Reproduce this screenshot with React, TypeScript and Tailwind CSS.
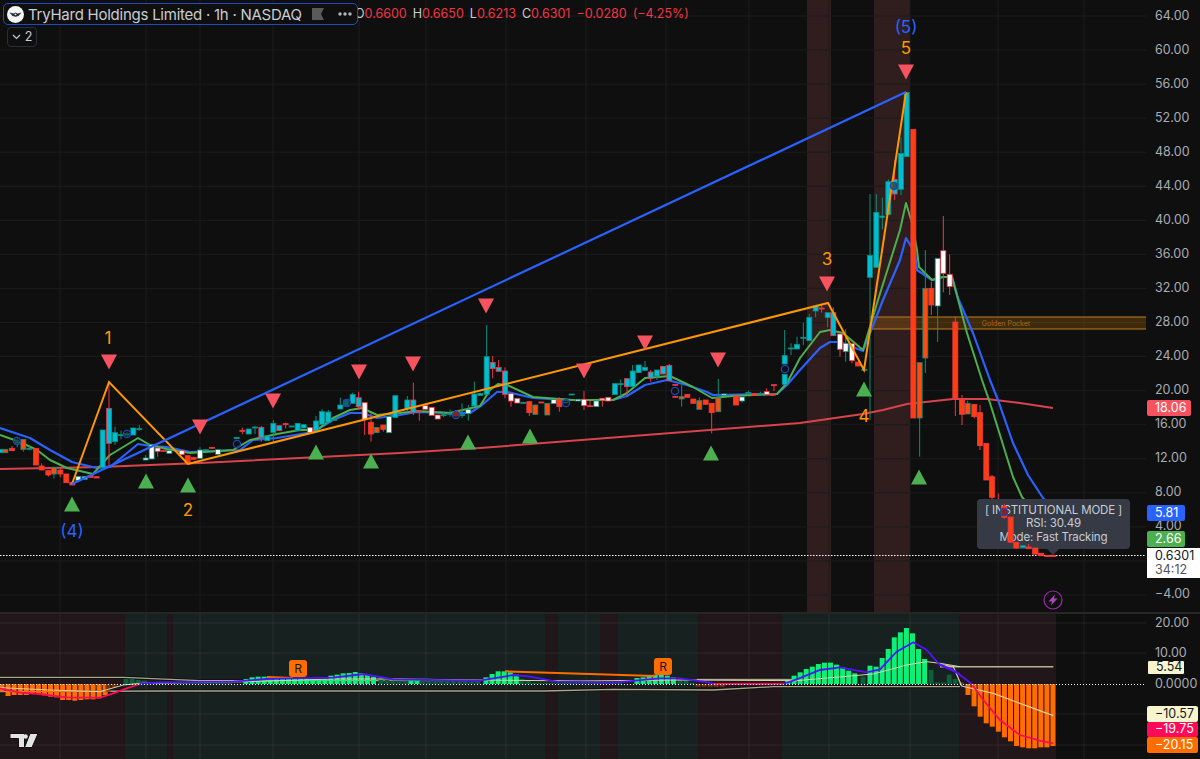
import React from 'react';

type Kind = 'c' | 'b' | 'w' | 'p' | 'r' | 'g';
type Row = [number, number, number, number, number, Kind];

const candleColors: Record<Kind, { fill: string; line: string }> = {
  c: { fill: '#00bcd4', line: '#0b8f7c' },
  b: { fill: '#00bcd4', line: '#f23645' },
  w: { fill: '#ffffff', line: '#0b8f7c' },
  p: { fill: '#ffffff', line: '#f23645' },
  r: { fill: '#ff3d12', line: '#f23645' },
  g: { fill: '#ff4a12', line: '#0b8f7c' },
};

// rows are [x, wickTop, wickBottom, bodyTop, bodyBottom, kind] at 3x, from an origin
const toCandles = (ox: number, oy: number, rows: Row[]) =>
  rows.map(([x, wt, wb, bt, bb, k]) => ({
    x: ox + x / 3,
    top: oy + (wt || bt) / 3,
    bottom: oy + (wb || bb) / 3,
    bodyTop: oy + bt / 3,
    height: Math.max((bb - bt) / 3, 1),
    k,
  }));

const candles = [
  ...toCandles(0, 360, [
    [3, 0, 0, 268, 278, 'c'], [16, 0, 0, 268, 278, 'g'], [36, 258, 0, 265, 272, 'r'], [52, 232, 262, 245, 250, 'c'],
    [70, 0, 275, 238, 268, 'g'], [88, 255, 0, 265, 268, 'c'], [108, 0, 0, 265, 315, 'r'], [125, 310, 0, 318, 330, 'r'],
    [145, 0, 350, 332, 345, 'r'], [162, 320, 355, 322, 342, 'g'], [181, 322, 352, 330, 342, 'r'], [199, 0, 0, 342, 368, 'r'],
    [217, 0, 0, 367, 375, 'r'], [235, 0, 0, 349, 362, 'w'], [254, 0, 0, 349, 358, 'w'], [272, 342, 0, 346, 352, 'r'],
    [290, 0, 0, 350, 354, 'r'], [308, 0, 0, 210, 322, 'c'], [327, 65, 320, 145, 250, 'b'], [345, 200, 255, 218, 245, 'c'],
    [363, 212, 238, 224, 227, 'c'], [381, 215, 232, 220, 226, 'c'], [400, 0, 0, 204, 225, 'c'], [418, 195, 212, 206, 208, 'c'],
    [437, 285, 0, 294, 300, 'w'], [455, 0, 0, 254, 297, 'w'], [473, 0, 290, 264, 274, 'p'], [491, 0, 0, 271, 273, 'r'],
    [508, 0, 0, 272, 280, 'w'], [545, 0, 0, 272, 284, 'p'], [563, 0, 0, 287, 312, 'r'], [581, 0, 0, 292, 298, 'r'],
    [600, 262, 0, 270, 295, 'w'], [618, 0, 0, 269, 272, 'c'], [636, 0, 0, 262, 265, 'r'], [654, 0, 0, 269, 283, 'w'],
    [710, 0, 0, 232, 236, 'c'], [727, 203, 223, 211, 214, 'r'], [746, 0, 0, 207, 222, 'c'], [765, 198, 222, 201, 203, 'c'],
    [784, 198, 245, 202, 233, 'b'], [802, 0, 0, 228, 242, 'c'], [820, 180, 245, 190, 217, 'c'], [838, 0, 0, 197, 212, 'b'],
    [857, 188, 205, 191, 193, 'r'], [875, 0, 0, 198, 200, 'c'], [893, 0, 0, 190, 212, 'c'], [911, 0, 0, 194, 204, 'c'],
    [930, 0, 0, 203, 217, 'p'], [948, 168, 0, 183, 213, 'c'], [966, 148, 0, 155, 193, 'c'], [985, 150, 0, 156, 187, 'c'],
    [1003, 0, 0, 178, 181, 'c'], [1021, 113, 0, 135, 147, 'c'], [1039, 0, 0, 120, 138, 'c'], [1058, 98, 0, 103, 130, 'c'],
    [1076, 95, 150, 113, 140, 'b'], [1094, 0, 225, 128, 178, 'p'], [1113, 160, 245, 187, 222, 'r'], [1130, 0, 0, 202, 218, 'g'],
    [1150, 0, 215, 195, 208, 'r'], [1167, 0, 0, 170, 218, 'w'], [1186, 0, 0, 107, 172, 'c'],
  ] as Row[]),
  ...toCandles(400, 290, [
    [22, 318, 365, 330, 355, 'c'], [40, 278, 375, 330, 368, 'b'], [58, 0, 392, 363, 366, 'r'], [76, 0, 0, 347, 358, 'p'],
    [95, 0, 0, 352, 376, 'p'], [113, 0, 0, 375, 387, 'p'], [131, 365, 382, 374, 376, 'c'], [150, 358, 380, 370, 372, 'c'],
    [168, 360, 385, 365, 378, 'r'], [186, 340, 385, 374, 377, 'c'], [205, 345, 392, 358, 370, 'w'], [223, 275, 0, 312, 348, 'c'],
    [241, 0, 0, 310, 316, 'c'], [260, 105, 0, 200, 313, 'c'], [278, 198, 265, 217, 236, 'b'], [296, 210, 0, 232, 244, 'b'],
    [315, 232, 325, 243, 313, 'b'], [333, 0, 350, 311, 333, 'p'], [352, 0, 0, 325, 339, 'p'], [370, 0, 0, 337, 339, 'c'],
    [388, 0, 378, 335, 368, 'r'], [406, 0, 0, 345, 373, 'g'], [424, 0, 0, 336, 339, 'r'], [442, 0, 0, 340, 375, 'g'],
    [461, 0, 0, 329, 341, 'w'], [478, 322, 365, 328, 350, 'r'], [497, 0, 0, 336, 339, 'c'], [515, 0, 0, 312, 314, 'c'],
    [534, 0, 0, 328, 333, 'w'], [552, 303, 360, 328, 347, 'p'], [570, 333, 0, 347, 350, 'r'], [589, 0, 0, 333, 350, 'w'],
    [607, 0, 350, 325, 330, 'p'], [625, 0, 0, 322, 333, 'p'], [645, 0, 0, 281, 314, 'c'], [662, 268, 318, 281, 284, 'c'],
    [681, 0, 318, 266, 290, 'b'], [698, 225, 0, 243, 290, 'c'], [716, 0, 0, 225, 248, 'c'], [735, 213, 0, 232, 241, 'c'],
    [752, 240, 275, 246, 265, 'b'], [771, 0, 270, 240, 258, 'c'], [789, 0, 0, 229, 252, 'b'], [808, 222, 0, 226, 271, 'b'],
    [826, 0, 0, 283, 286, 'r'], [826, 0, 0, 319, 322, 'r'], [845, 285, 350, 320, 327, 'g'], [862, 0, 0, 313, 322, 'r'],
    [880, 0, 0, 327, 340, 'r'], [898, 322, 0, 332, 358, 'g'], [917, 0, 0, 330, 343, 'r'], [935, 0, 430, 340, 368, 'r'],
    [955, 267, 0, 323, 365, 'g'], [972, 0, 0, 312, 316, 'w'], [1008, 0, 0, 318, 345, 'r'], [1026, 0, 338, 321, 333, 'w'],
    [1045, 302, 314, 307, 309, 'c'], [1063, 0, 0, 310, 316, 'r'], [1081, 305, 0, 310, 313, 'c'], [1100, 295, 0, 305, 313, 'p'],
    [1118, 0, 0, 312, 316, 'r'],
  ] as Row[]),
  ...toCandles(780, 290, [
    [-18, 0, 303, 284, 287, 'r'], [14, 120, 0, 197, 222, 'c'], [14, 0, 0, 253, 283, 'c'], [33, 160, 195, 174, 176, 'c'],
    [51, 140, 0, 163, 177, 'c'], [70, 98, 165, 142, 145, 'c'], [88, 72, 0, 82, 152, 'c'], [107, 0, 82, 48, 63, 'c'],
    [125, 42, 68, 54, 57, 'r'], [143, 0, 112, 68, 83, 'c'], [160, 52, 0, 68, 137, 'b'], [180, 0, 200, 132, 178, 'p'],
    [197, 118, 215, 160, 185, 'w'], [216, 0, 220, 161, 212, 'p'], [234, 0, 0, 216, 228, 'r'], [253, 0, 0, 238, 241, 'c'],
  ] as Row[]),
  ...toCandles(760, 60, [
    [330, 402, 1080, 586, 652, 'c'], [349, 402, 0, 457, 622, 'c'], [367, 413, 508, 468, 472, 'c'], [385, 358, 0, 365, 464, 'c'],
    [404, 300, 420, 358, 402, 'b'], [423, 232, 405, 280, 388, 'c'], [440, 0, 0, 97, 290, 'c'], [460, 0, 0, 208, 1074, 'r'],
    [479, 0, 1190, 908, 1074, 'g'], [496, 570, 939, 685, 894, 'g'], [514, 665, 765, 685, 735, 'r'], [533, 0, 846, 595, 738, 'w'],
    [550, 468, 697, 572, 640, 'p'], [569, 583, 705, 643, 680, 'p'],
  ] as Row[]),
  ...toCandles(780, 290, [
    [526, 80, 378, 96, 325, 'r'], [546, 315, 405, 328, 373, 'r'], [563, 332, 0, 340, 372, 'g'], [583, 0, 385, 343, 380, 'r'],
    [600, 345, 480, 368, 467, 'r'], [619, 0, 0, 460, 570, 'r'],
  ] as Row[]),
  ...toCandles(950, 380, [
    [126, 285, 358, 290, 352, 'r'], [145, 340, 395, 372, 382, 'r'], [163, 372, 416, 380, 412, 'r'], [182, 0, 0, 411, 487, 'r'],
    [199, 0, 506, 487, 504, 'r'], [219, 0, 0, 497, 503, 'c'], [236, 492, 0, 501, 506, 'r'], [256, 0, 0, 504, 522, 'r'],
    [273, 0, 0, 520, 527, 'r'], [292, 0, 0, 526, 528, 'r'], [310, 0, 0, 526, 528, 'r'],
  ] as Row[]),
];

const gridX = [60, 146, 200, 273, 359, 426, 506, 586, 666, 749, 829, 910, 998, 1084];
// the 0.00 tick sits under the last-price badge in the picture, so it has no text
const priceTicks = ['64.00', '60.00', '56.00', '52.00', '48.00', '44.00', '40.00', '36.00', '32.00', '28.00', '24.00', '20.00', '16.00', '12.00', '8.00', '4.00', '', '−4.00'];
const downMarks = [[109, 362], [200, 427], [273, 401], [359, 372], [413, 364], [486, 306], [584, 371], [645, 343], [718, 360], [827, 284], [906, 72]];
const upMarks = [[72, 504], [146, 481], [188, 485], [316, 452], [371, 461], [468, 442], [530, 436], [711, 453], [864, 389], [919, 477]];
const rings = [[17, 441], [127, 434], [237, 444], [347, 403], [456, 415], [566, 403], [675, 391], [785, 369], [894, 186]];
const waveLabels = [
  { t: '1', x: 108, y: 344, c: '#ff9800' }, { t: '2', x: 188, y: 516, c: '#ff9800' }, { t: '3', x: 827, y: 265, c: '#ff9800' },
  { t: '4', x: 864, y: 422, c: '#ff9800' }, { t: '5', x: 906, y: 54, c: '#ff9800' },
  { t: '(4)', x: 72, y: 537, c: '#2962ff' }, { t: '(5)', x: 906, y: 33, c: '#2962ff' },
];

const redLine = '0,469 100,467 200,463 400,453 480,448 800,423 863,414 883,410 907,404 953,399 987,399 1020,403 1053,408';
const blueLine = '0,428 30,438 50,450 72,462 97,468 110,467 138,444 150,446 167,447 190,452 240,450 253,440 277,438 313,432 333,420 350,413 362,413 377,418 400,415 417,412 450,413 470,413 482,405 497,392 507,392 533,398 567,400 613,400 627,396 645,385 667,380 687,385 707,392 713,395 777,394 787,385 800,370 820,348 830,342 840,342 863,351 883,300 900,260 906,238 915,253 917,270 932,280 943,277 952,277 958,298 973,333 990,380 998,400 1013,443 1028,475 1043,498 1056,511';
const greenLine = '0,435 20,442 37,450 50,460 67,468 93,474 110,455 138,438 150,445 167,449 190,453 233,450 250,440 277,434 300,430 317,430 333,418 350,410 362,408 377,415 400,413 417,411 450,413 480,406 490,390 498,384 507,385 533,397 573,400 613,400 627,393 645,378 670,376 693,387 712,398 733,396 777,394 787,383 800,358 820,332 830,330 843,333 863,350 878,300 900,230 906,203 912,223 917,250 919,267 932,280 943,277 952,277 967,333 982,380 990,403 1000,435 1013,477 1022,497 1056,538';

const histRuns: [number, string, number[]][] = [
  [126, '#0c5f38', [15, 15, 12, 10, 4, 4, 4, 4, 4, 4, 4, 4, 4, 4, 4, 4, 4, 4]],
  [246, '#0cf07a', [15, 20, 22, 22, 20, 16, 15, 15, 18, 18, 17, 15, 15, 15, 25, 28, 32, 33, 36, 33, 28, 22]],
  [381, '#0c5f38', [18, 12, 10, 10, 10]],
  [411, '#0cf07a', [14, 14]],
  [423, '#0c5f38', [16, 16, 12, 10, 12, 15, 12, 10, 8, 8]],
  [486, '#0cf07a', [20, 30, 38, 38, 35, 28]],
  [522, '#0c5f38', [15, 10, 4, 4, 4, 4, 4, 4, 4, 4, 4, 4, 4, 4, 4, 4, 4]],
  [637, '#0cf07a', [18, 20, 25, 28, 30, 25, 20]],
  [680, '#0c5f38', [12, 12, 4]],
  [782, '#0c5f38', [4]],
  [788, '#0cf07a', [12, 25, 35, 45, 52, 60, 64, 64, 58, 50, 40, 32]],
  [863, '#0c5f38', [22]],
  [870, '#0cf07a', [55, 52, 78, 105, 140, 155, 168, 152, 105, 75]],
  [931, '#0c5f38', [42, 5, 5, 28, 15, 5]],
];
const histDown: [number, string, number[]][] = [
  [2, '#ff6d00', [23, 36, 33, 33, 33, 28, 30, 34, 38, 40, 48, 48, 50, 48, 46, 46, 43, 33]],
  [108, '#7a3306', [23, 11]],
  [698, '#7a3306', [8, 8, 8, 8, 8]],
  [968, '#ff6d00', [33, 67, 98, 118, 128, 143, 160, 172, 186, 190, 193, 193, 190, 190, 186]],
];

const z = (ox: number, oy: number, pts: number[][]) => pts.map(([x, y]) => `${ox + x / 3},${oy + y / 3}`).join(' ');

function Candles({ items }: { items: typeof candles }) {
  return (
    <>
      {items.map((c, i) => (
        <g key={i}>
          <line x1={c.x} x2={c.x} y1={c.top} y2={c.bottom} stroke={candleColors[c.k].line} strokeWidth={1} />
          <rect x={c.x - 2.5} y={c.bodyTop} width={5} height={c.height} fill={candleColors[c.k].fill} stroke={candleColors[c.k].line} strokeWidth={0.8} />
        </g>
      ))}
    </>
  );
}

function Badge({ className, children }: { className: string; children: React.ReactNode }) {
  return <div className={`absolute left-[1px] flex items-center rounded-[2px] pl-[8px] text-[12.5px] ${className}`}>{children}</div>;
}

export default function App() {
  const overTooltip = candles.filter((c) => c.x > 1000 && c.bottom > 499);
  return (
    <div className="flex h-[759px] w-[1200px] flex-col overflow-hidden bg-[#0f0f0f] [font-family:Inter,'Liberation_Sans',sans-serif] text-[#a9acb3]">
      <div className="relative flex h-[612px]">
        <div className="relative w-[1146px]">
          <svg width={1146} height={612} viewBox="0 0 1146 612" className="block">
            <rect x={807} y={0} width={24} height={612} fill="#7e4040" opacity={0.3} />
            <rect x={874} y={0} width={36} height={612} fill="#7e4040" opacity={0.3} />
            {priceTicks.map((_, i) => (
              <line key={i} x1={0} x2={1146} y1={16 + i * 34.06} y2={16 + i * 34.06} stroke="#1c1c1c" />
            ))}
            {gridX.map((x) => (
              <line key={x} x1={x} x2={x} y1={0} y2={612} stroke="#1c1c1c" />
            ))}
            <rect x={870} y={317} width={276} height={12} fill="#ff9800" opacity={0.2} />
            <line x1={870} x2={1146} y1={317} y2={317} stroke="#c07f1d" />
            <line x1={870} x2={1146} y1={329} y2={329} stroke="#c07f1d" />
            <text x={1006} y={325.5} textAnchor="middle" fontSize={7} fill="#a8691a">Golden Pocket</text>
            <polyline points={redLine} fill="none" stroke="#d9434d" strokeWidth={2} />
            <polyline points={blueLine} fill="none" stroke="#2962ff" strokeWidth={2.2} strokeLinejoin="round" />
            <polyline points={greenLine} fill="none" stroke="#4caf50" strokeWidth={2} strokeLinejoin="round" />
            <Candles items={candles} />
            <polyline points="72,484 109,382 188,464 828,303 864,370 906,92" fill="none" stroke="#ff9800" strokeWidth={2} />
            <line x1={72} y1={484} x2={906} y2={92} stroke="#2962ff" strokeWidth={2.2} />
            {rings.map(([x, y]) => (
              <circle key={x} cx={x} cy={y} r={3.6} fill="#0f0f0f" fillOpacity={0.5} stroke="#1f45b8" strokeWidth={1.3} />
            ))}
            {downMarks.map(([x, y]) => (
              <polygon key={x} points={`${x - 8},${y - 7.5} ${x + 8},${y - 7.5} ${x},${y + 7.5}`} fill="#f7525f" />
            ))}
            {upMarks.map(([x, y]) => (
              <polygon key={x} points={`${x - 8},${y + 7.5} ${x + 8},${y + 7.5} ${x},${y - 7.5}`} fill="#4caf50" />
            ))}
            {waveLabels.map((l) => (
              <text key={l.t} x={l.x} y={l.y} textAnchor="middle" fontSize={17} fill={l.c}>{l.t}</text>
            ))}
            <line x1={0} x2={1146} y1={555.5} y2={555.5} stroke="#ffffff" strokeWidth={1.2} strokeDasharray="1.5 1.5" />
          </svg>

          <div className="absolute left-[355px] top-[6px] flex gap-[6px] whitespace-nowrap text-[12.5px] leading-[16px] text-[#f23645]">
            <span><b className="font-normal text-[#c9ccd3]">O</b>0.6600</span>
            <span><b className="font-normal text-[#c9ccd3]">H</b>0.6650</span>
            <span><b className="font-normal text-[#c9ccd3]">L</b>0.6213</span>
            <span><b className="font-normal text-[#c9ccd3]">C</b>0.6301</span>
            <span>−0.0280</span>
            <span>(−4.25%)</span>
          </div>
          <div className="absolute left-[3px] top-[3px] flex h-[22px] w-[355px] items-center rounded-[5px] border border-[#1e4bc2] bg-[#0f0f0f] pl-[3px]">
            <svg width={17} height={17} viewBox="0 0 17 17" className="mr-[4px] shrink-0">
              <circle cx={8.5} cy={8.5} r={8.5} fill="#f5f5f5" />
              <path d="M2.500 6.500l4 1 2-1 2 1 4-1-3 3.500-3 .8-3-.8z" fill="#2a2e39" />
              <circle cx={8.5} cy={8.3} r={0.9} fill="#f5f5f5" />
            </svg>
            <span className="whitespace-nowrap text-[15px] leading-none tracking-[-0.25px] text-[#c9ccd3]">TryHard Holdings Limited · 1h · NASDAQ</span>
            <svg width={12} height={12} viewBox="0 0 12 12" className="ml-[10px] shrink-0">
              <polygon points="0,0 12,0 9,6 12,12 0,12" fill="#5a5a5a" />
            </svg>
            <svg width={16} height={4} viewBox="0 0 16 4" className="ml-[14px] shrink-0">
              <circle cx={2} cy={2} r={1.7} fill="#b2b5be" />
              <circle cx={7} cy={2} r={1.7} fill="#b2b5be" />
              <circle cx={12} cy={2} r={1.7} fill="#b2b5be" />
            </svg>
          </div>
          <div className="absolute left-[7px] top-[27px] flex h-[20px] w-[30px] items-center justify-center gap-[4px] rounded-[4px] border border-[#2a2e39] text-[12.5px] text-[#c9ccd3]">
            <svg width={9} height={6} viewBox="0 0 9 6"><path d="M1 1l3.5 3.5L8 1" fill="none" stroke="#c9ccd3" strokeWidth={1.2} /></svg>
            <span>2</span>
          </div>

          <div className="absolute left-[977px] top-[499px] flex h-[50px] w-[153px] flex-col items-center justify-center rounded-[4px] bg-[#363a45] text-center text-[11.5px] leading-[13.3px] tracking-[-0.15px] text-[#c9ccd3]">
            <span className="whitespace-nowrap">[ INSTITUTIONAL MODE ]</span>
            <span>RSI: 30.49</span>
            <span>Mode: Fast Tracking</span>
            <div className="absolute left-[70px] top-[50px] h-0 w-0 border-x-[6px] border-t-[6px] border-x-transparent border-t-[#363a45]" />
          </div>
          <svg width={1146} height={612} viewBox="0 0 1146 612" className="pointer-events-none absolute left-0 top-0">
            <Candles items={overTooltip} />
            <circle cx={1004} cy={512} r={3.6} fill="#0f0f0f" fillOpacity={0.5} stroke="#1f45b8" strokeWidth={1.3} />
          </svg>

          <svg width={20} height={20} viewBox="0 0 20 20" className="absolute left-[1043px] top-[590px]">
            <circle cx={10} cy={10} r={9} fill="none" stroke="#9c27b0" strokeWidth={1.2} />
            <path d="M12 4.500L5.500 11.500h3.500l-1 4 6.500-7h-3.500z" fill="#ab47bc" />
          </svg>
        </div>
        <div className="relative w-[54px]">
          <div className="-mt-px flex flex-col pl-[9px] text-[12.5px]">
            {priceTicks.map((t, i) => (
              <div key={i} className="flex h-[34.06px] items-center">{t}</div>
            ))}
          </div>
          <Badge className="top-[400px] h-[16px] w-[44px] bg-[#f7525f] text-white">18.06</Badge>
          <Badge className="top-[505px] h-[16px] w-[38px] bg-[#2962ff] text-white">5.81</Badge>
          <Badge className="top-[531px] h-[16px] w-[38px] bg-[#4caf50] text-white">2.66</Badge>
          <div className="absolute left-[1px] top-[548px] flex h-[30px] w-[53px] flex-col justify-center bg-white pl-[8px] text-[12.5px] leading-[14px] text-[#131722]">
            <span>0.6301</span>
            <span className="text-[#50535e]">34:12</span>
          </div>
        </div>
      </div>

      <div className="h-[2px] bg-[#262626]" />

      <div className="relative flex h-[145px]">
        <div className="relative w-[1146px]">
          <svg width={1146} height={145} viewBox="0 614 1146 145" className="block">
            <rect x={0} y={614} width={125} height={145} fill="#211619" />
            <rect x={125} y={614} width={42} height={145} fill="#17211f" />
            <rect x={167} y={614} width={6} height={145} fill="#211619" />
            <rect x={173} y={614} width={372} height={145} fill="#17211f" />
            <rect x={545} y={614} width={13} height={145} fill="#211619" />
            <rect x={558} y={614} width={42} height={145} fill="#17211f" />
            <rect x={600} y={614} width={18} height={145} fill="#211619" />
            <rect x={618} y={614} width={80} height={145} fill="#17211f" />
            <rect x={698} y={614} width={84} height={145} fill="#211619" />
            <rect x={782} y={614} width={177} height={145} fill="#17211f" />
            <rect x={959} y={614} width={97} height={145} fill="#211619" />
            {[623, 653, 714, 745].map((y) => (
              <line key={y} x1={0} x2={1146} y1={y} y2={y} stroke="#ffffff" strokeOpacity={0.07} />
            ))}
            {gridX.map((x) => (
              <line key={x} x1={x} x2={x} y1={614} y2={759} stroke="#ffffff" strokeOpacity={0.07} />
            ))}
            {[
              z(0, 610, [[0, 202], [370, 202], [600, 212], [1440, 212]]),
              z(0, 610, [[0, 245], [500, 243], [1440, 243]]),
              z(480, 610, [[0, 243], [190, 243], [400, 238], [700, 240], [880, 230], [1440, 230]]),
              z(480, 610, [[650, 208], [950, 208]]),
            ].map((p) => (
              <g key={p}>
                <polyline points={p} fill="none" stroke="#0f0f0f" strokeWidth={3} />
                <polyline points={p} fill="none" stroke="#a9a68c" strokeWidth={1.3} />
              </g>
            ))}
            {histRuns.map(([start, color, hs]) =>
              hs.map((h, i) => (
                <rect key={`${start}-${i}`} x={start + i * 6.07 - 2.5} y={684 - h / 3} width={5} height={h / 3} fill={color} />
              ))
            )}
            {histDown.map(([start, color, hs]) =>
              hs.map((h, i) => (
                <rect key={`${start}-${i}`} x={start + i * 6.07 - 2.5} y={684} width={5} height={h / 3} fill={color} />
              ))
            )}
            <polyline points={z(940, 610, [[0, 170], [340, 170]])} fill="none" stroke="#b9b394" strokeWidth={1.5} />
            <polyline points={z(0, 610, [[0, 233], [150, 240], [300, 245], [370, 225], [420, 220], [740, 215], [1000, 207], [1200, 207], [1440, 210]])} fill="none" stroke="#d9d3b0" strokeWidth={1} />
            <polyline points={z(480, 610, [[0, 210], [300, 213], [600, 210], [950, 212], [1180, 192], [1280, 165], [1340, 155], [1380, 160], [1440, 170]])} fill="none" stroke="#d9d3b0" strokeWidth={1} />
            <polyline points={z(940, 610, [[0, 163], [40, 170], [65, 228], [160, 250], [240, 280], [340, 317]])} fill="none" stroke="#e6c9a0" strokeWidth={1.2} />
            <line x1={505} y1={671.3} x2={655} y2={676} stroke="#ff6d00" strokeWidth={2} />
            <line x1={267} y1={677} x2={293} y2={678} stroke="#ff6d00" strokeWidth={2} />
            <polyline points={z(0, 610, [[420, 222], [480, 217], [700, 215], [800, 207], [870, 205], [1000, 203], [1090, 192], [1180, 208], [1440, 212]])} fill="none" stroke="#5212ff" strokeWidth={1.8} />
            <polyline points={z(480, 610, [[0, 212], [100, 195], [150, 200], [230, 215], [400, 218], [540, 205], [600, 205], [690, 218], [700, 222]])} fill="none" stroke="#5212ff" strokeWidth={1.8} />
            <polyline points={z(480, 610, [[910, 222], [950, 208], [1020, 180], [1080, 172], [1160, 187], [1200, 178], [1250, 125], [1300, 97], [1340, 120], [1380, 165], [1440, 192]])} fill="none" stroke="#5212ff" strokeWidth={1.8} />
            <polyline points={z(940, 610, [[0, 163], [40, 180], [80, 210], [95, 222]])} fill="none" stroke="#5212ff" strokeWidth={1.8} />
            <polyline points={z(0, 610, [[0, 235], [60, 248], [120, 252], [200, 262], [300, 263], [340, 250], [380, 235], [420, 222]])} fill="none" stroke="#ff0a5a" strokeWidth={1.8} />
            <polyline points={z(480, 610, [[700, 222], [910, 222]])} fill="none" stroke="#ff0a5a" strokeWidth={1.8} />
            <polyline points={z(940, 610, [[95, 222], [130, 270], [180, 330], [240, 375], [300, 392], [340, 400]])} fill="none" stroke="#ff0a5a" strokeWidth={1.8} />
            <line x1={0} x2={1146} y1={684.5} y2={684.5} stroke="#ffffff" strokeWidth={1} strokeDasharray="1 2" />
            <g stroke="#0f0f0f" strokeWidth={1} fill="#e4e4e4">
              <path d="M10 733.500h14.500v14h-6v-9h-8.500z" />
              <path d="M30 733.500h8l-6 14h-7.500z" />
            </g>
            <circle cx={25.500} cy={736.500} r={2.300} fill="#e4e4e4" />
          </svg>
          <div className="absolute left-[289px] top-[46px] flex h-[17px] w-[18px] items-center justify-center rounded-[3px] bg-[#ff6d00] text-[12px] text-[#131722]">R</div>
          <div className="absolute left-[654px] top-[44px] flex h-[17px] w-[18px] items-center justify-center rounded-[3px] bg-[#ff6d00] text-[12px] text-[#131722]">R</div>
        </div>
        <div className="relative w-[54px]">
          <div className="flex flex-col pl-[9px] text-[12.5px]">
            {['20.00', '10.00', '0.0000'].map((t) => (
              <div key={t} className="flex h-[30.5px] items-center first:mt-[-6px]">{t}</div>
            ))}
          </div>
          <Badge className="top-[46px] h-[15px] w-[38px] border border-[#0f0f0f] bg-[#f8f5ce] text-[#131722]">5.54</Badge>
          <Badge className="top-[92px] h-[16px] w-[51px] bg-[#f8f5ce] text-[#131722]">−10.57</Badge>
          <Badge className="top-[108px] h-[15px] w-[51px] bg-[#ff0a5a] text-white">−19.75</Badge>
          <Badge className="top-[123px] h-[16px] w-[51px] bg-[#ff6d00] text-white">−20.15</Badge>
        </div>
      </div>
    </div>
  );
}
